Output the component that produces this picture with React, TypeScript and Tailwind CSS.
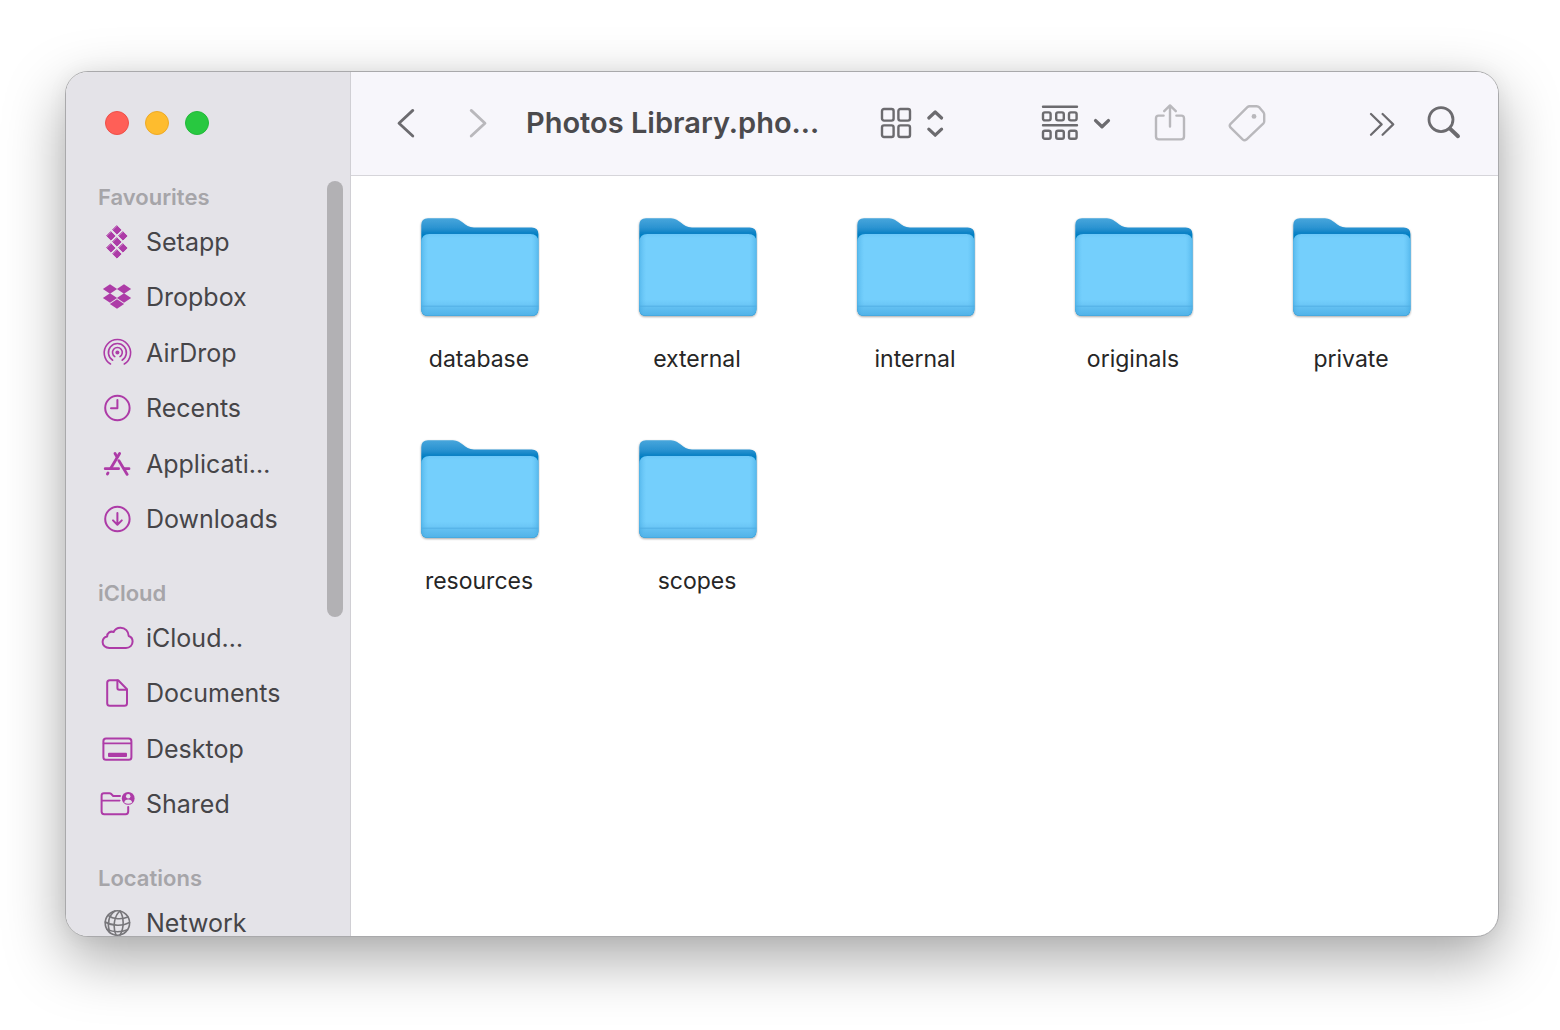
import type { ReactNode } from 'react'

const folders = ['database', 'external', 'internal', 'originals', 'private', 'resources', 'scopes']

function diamond(cx: number, cy: number, w: number, h: number) {
  return `M${cx} ${cy - h}L${cx + w} ${cy}L${cx} ${cy + h}L${cx - w} ${cy}Z`
}

function ItemIcon({ children }: { children: ReactNode }) {
  return (
    <svg
      viewBox="0 0 36 36"
      className="size-9 shrink-0"
      fill="none"
      stroke="currentColor"
      strokeWidth="2"
      strokeLinecap="round"
      strokeLinejoin="round"
      aria-hidden="true"
    >
      {children}
    </svg>
  )
}

const setappDiamonds = [[18, 6], [12, 12], [24, 12], [18, 18], [12, 24], [24, 24], [18, 30]]
const dropboxDiamonds = [[11, 10], [25, 10], [11, 19], [25, 19], [18, 25]]

const icons = {
  setapp: (
    <g fill="currentColor" strokeWidth="1">
      {setappDiamonds.map(([x, y]) => (
        <path key={`${x}-${y}`} d={diamond(x, y, 4.1, 4.1)} />
      ))}
    </g>
  ),
  dropbox: (
    <g fill="currentColor" stroke="none">
      {dropboxDiamonds.map(([x, y]) => (
        <path key={`${x}-${y}`} d={diamond(x, y, 7.1, 4.7)} />
      ))}
    </g>
  ),
  airdrop: (
    <g strokeWidth="1.6">
      <circle cx="18.4" cy="17.6" r="2" fill="currentColor" stroke="none" />
      <path d="M15.8 21.6A4.9 4.9 0 1 1 21 21.6" />
      <path d="M13.7 25.2A9 9 0 1 1 23.1 25.2" />
      <path d="M11.5 29A13.2 13.2 0 1 1 25.3 29" />
    </g>
  ),
  recents: (
    <>
      <circle cx="18.4" cy="18" r="12.2" />
      <path d="M18.4 10V18.2H12" />
    </>
  ),
  applications: (
    <g strokeWidth="2.8">
      <path d="M16 7.5L18.1 11" />
      <path d="M20.6 7.5L11.8 22.2" />
      <path d="M19.8 14.6L28.2 28.4" />
      <path d="M6.2 22.7H19.6M25.2 22.7H30" />
      <path d="M9 27L8.4 28" />
    </g>
  ),
  downloads: (
    <>
      <circle cx="18.4" cy="18" r="12.2" />
      <path d="M18.4 12V23.6M14 19.4L18.4 23.8L22.8 19.4" />
    </>
  ),
  icloud: (
    <path d="M10.4 28C6.5 28 3.6 25.4 3.6 22C3.6 19 5.4 17 8.2 16.4C8.1 12.9 11.5 10.8 14.6 12C16 9.2 18.8 7.6 21.6 7.7C26.2 7.8 29.6 11.2 29.7 16C32 16.7 33.6 19 33.6 21.6C33.6 25.2 30.8 28 27 28Z" />
  ),
  documents: (
    <>
      <path d="M10.8 5.2H19.2L28 14.2V28.2Q28 30.8 25.4 30.8H10.8Q8.2 30.8 8.2 28.2V7.8Q8.2 5.2 10.8 5.2Z" />
      <path d="M18.4 5.6V13Q18.4 14.8 20.2 14.8H27.6" />
    </>
  ),
  desktop: (
    <>
      <rect x="4.4" y="7.6" width="28" height="21.2" rx="2.6" />
      <path d="M4.6 12.4H32.2" strokeWidth="1.6" />
      <rect x="9" y="21.8" width="19" height="4.2" rx="1" fill="currentColor" stroke="none" />
    </>
  ),
  shared: (
    <>
      <path d="M21 10H14.2L12 7.8Q11.4 7.2 10.4 7.2H5Q2.6 7.2 2.6 9.6V25.6Q2.6 28.2 5.2 28.2H26.6Q29.2 28.2 29.2 25.6V21" />
      <path d="M2.8 14.6H20.8" strokeWidth="1.6" />
      <circle cx="29.2" cy="12.4" r="6.4" fill="currentColor" stroke="none" />
      <circle cx="29.2" cy="10.2" r="2.2" fill="#e4e3e8" stroke="none" />
      <path d="M25.2 16.4Q25.8 13.4 29.2 13.4T33.2 16.4Q31.4 17.7 29.2 17.7T25.2 16.4Z" fill="#e4e3e8" stroke="none" />
    </>
  ),
  network: (
    <g strokeWidth="1.6">
      <circle cx="18.4" cy="18" r="12.2" />
      <path d="M21 6C15 11 13.6 22 17 30" />
      <path d="M16 6C9.6 10 8 19 10.6 27.4" />
      <path d="M21 6C25 12 25.4 23 21 30" />
      <path d="M9 10.4C14 14.4 23 14.6 29 12" />
      <path d="M6.2 17C13 21 24 21.4 30.6 17.4" />
      <path d="M8 24.4C14 27.2 22 27.4 28.6 24.8" />
    </g>
  ),
}

type Item = { icon: keyof typeof icons; label: string }

const favourites: Item[] = [
  { icon: 'setapp', label: 'Setapp' },
  { icon: 'dropbox', label: 'Dropbox' },
  { icon: 'airdrop', label: 'AirDrop' },
  { icon: 'recents', label: 'Recents' },
  { icon: 'applications', label: 'Applicati…' },
  { icon: 'downloads', label: 'Downloads' },
]

const icloud: Item[] = [
  { icon: 'icloud', label: 'iCloud…' },
  { icon: 'documents', label: 'Documents' },
  { icon: 'desktop', label: 'Desktop' },
  { icon: 'shared', label: 'Shared' },
]

const locations: Item[] = [{ icon: 'network', label: 'Network' }]

function Section({ title, items, listClass, iconClass = 'text-[#ad3ba7]' }: {
  title: string
  items: Item[]
  listClass: string
  iconClass?: string
}) {
  return (
    <section>
      <h2 className="h-[33px] text-[22px] leading-8 font-semibold text-[#a6a5a9]">{title}</h2>
      <ul className={`flex flex-col pl-px ${listClass}`}>
        {items.map(({ icon, label }) => (
          <li key={label} className="flex flex-1">
            <a href="#" className={`flex flex-1 items-center gap-[11px] ${iconClass}`}>
              <ItemIcon>{icons[icon]}</ItemIcon>
              <span className="whitespace-nowrap text-[25px] leading-6 text-[#464548]">{label}</span>
            </a>
          </li>
        ))}
      </ul>
    </section>
  )
}

function Sidebar() {
  return (
    <aside className="flex w-[285px] shrink-0 flex-col border-r border-[#d0cfd4] bg-[#e4e3e8]">
      <div className="flex h-[109px] shrink-0 gap-4 pt-[39px] pl-[39px]">
        <button aria-label="Close" className="size-6 rounded-full border border-[#ee5048] bg-[#ff5f57]" />
        <button aria-label="Minimise" className="size-6 rounded-full border border-[#eeaa25] bg-[#febc2e]" />
        <button aria-label="Zoom" className="size-6 rounded-full border border-[#22b93a] bg-[#28c840]" />
      </div>
      <div className="flex min-h-0 flex-1">
        <nav className="flex min-w-0 flex-1 flex-col gap-[30px] overflow-hidden pl-8">
          <Section title="Favourites" items={favourites} listClass="h-[333px]" />
          <Section title="iCloud" items={icloud} listClass="h-[222px]" />
          <Section title="Locations" items={locations} listClass="h-[55px]" iconClass="text-[#77767a]" />
        </nav>
        <div className="mr-[7px] h-[436px] w-4 rounded-full bg-[#b2b1b4]" />
      </div>
    </aside>
  )
}

function Toolbar() {
  return (
    <header
      className="flex h-[104px] shrink-0 items-center border-b border-[#d6d5da] bg-[#f7f6fb] pr-[37px] pb-0.5 pl-11 text-[#6c6b6f] [&_svg]:fill-none [&_svg]:stroke-current"
    >
      <button aria-label="Back">
        <svg width="20" height="32" viewBox="0 0 20 32" strokeWidth="2.8" strokeLinecap="round" strokeLinejoin="round">
          <path d="M17.8 3.4L4 16.2L17.8 29" />
        </svg>
      </button>
      <button aria-label="Forward" className="ml-[53px] text-[#b9b8bc]">
        <svg width="20" height="32" viewBox="0 0 20 32" strokeWidth="2.8" strokeLinecap="round" strokeLinejoin="round">
          <path d="M3.2 3.4L17 16.2L3.2 29" />
        </svg>
      </button>
      <h1 className="ml-[38px] w-[354px] whitespace-nowrap text-[29px] leading-9 font-semibold text-[#4b4a4d]">
        Photos Library.pho…
      </h1>
      <button aria-label="View as icons" className="flex items-center gap-[14px]">
        <svg width="32" height="32" viewBox="0 0 32 32" strokeWidth="2.4">
          <rect x="2" y="2" width="11.6" height="11.6" rx="2" />
          <rect x="18.4" y="2" width="11.6" height="11.6" rx="2" />
          <rect x="2" y="18.4" width="11.6" height="11.6" rx="2" />
          <rect x="18.4" y="18.4" width="11.6" height="11.6" rx="2" />
        </svg>
        <svg width="18" height="32" viewBox="0 0 18 32" strokeWidth="3.2" strokeLinecap="round" strokeLinejoin="round">
          <path d="M2.8 11L9.2 5L15.6 11M2.8 22.2L9.2 28.2L15.6 22.2" />
        </svg>
      </button>
      <button aria-label="Group items" className="ml-[97px] flex items-center gap-[14px]">
        <svg width="38" height="38" viewBox="0 0 38 38" strokeWidth="2.4" strokeLinecap="round">
          <path d="M2 2.8H36M2 21.2H36" />
          <rect x="2" y="8.4" width="7.6" height="8" rx="1.8" />
          <rect x="15.2" y="8.4" width="7.6" height="8" rx="1.8" />
          <rect x="28" y="8.4" width="7.6" height="8" rx="1.8" />
          <rect x="2" y="26.8" width="7.6" height="8" rx="1.8" />
          <rect x="15.2" y="26.8" width="7.6" height="8" rx="1.8" />
          <rect x="28" y="26.8" width="7.6" height="8" rx="1.8" />
        </svg>
        <svg width="18" height="16" viewBox="0 0 18 16" strokeWidth="3.4" strokeLinecap="round" strokeLinejoin="round">
          <path d="M2.6 5.6L9 11.8L15.4 5.6" />
        </svg>
      </button>
      <button aria-label="Share" className="ml-[42px] text-[#b9b8bc]">
        <svg width="34" height="40" viewBox="0 0 34 40" strokeWidth="2.4" strokeLinecap="round" strokeLinejoin="round">
          <path d="M10.6 12.6H5.6Q3 12.6 3 15.2V33.6Q3 36.4 5.8 36.4H28.2Q31 36.4 31 33.6V15.2Q31 12.6 28.4 12.6H23.4" />
          <path d="M17 23.6V2.6M11.2 8.2L17 2.4L22.8 8.2" />
        </svg>
      </button>
      <button aria-label="Edit tags" className="ml-10 text-[#b9b8bc]">
        <svg width="40" height="40" viewBox="0 0 40 40" strokeWidth="2.4" strokeLinejoin="round">
          <path d="M22.6 3.2H29.6Q31.2 3.2 32.4 4.4L36.4 9.2Q37.2 10.2 37.2 11.6V18.4Q37.2 19.6 36.2 20.6L19.4 36.6Q17.4 38 15.6 36.4L3.4 24.4Q2 22.6 3.6 20.8L20.4 4.2Q21.4 3.2 22.6 3.2Z" />
          <circle cx="27" cy="13.4" r="2.4" fill="currentColor" stroke="none" />
        </svg>
      </button>
      <button aria-label="More toolbar items" className="ml-auto">
        <svg width="26" height="26" viewBox="0 0 26 26" strokeWidth="2.2" strokeLinecap="round" strokeLinejoin="round">
          <path d="M2 4L12.6 14.4L2 24.8M13.6 4L24.2 14.4L13.6 24.8" />
        </svg>
      </button>
      <button aria-label="Search" className="ml-8">
        <svg width="34" height="36" viewBox="0 0 34 36" strokeWidth="2.8" strokeLinecap="round">
          <circle cx="14" cy="14.6" r="12" />
          <path d="M23 23.6L31 31.2" strokeWidth="4" />
        </svg>
      </button>
    </header>
  )
}

function FolderIcon() {
  return (
    <svg width="122" height="102" viewBox="0 0 122 102" aria-hidden="true">
      <defs>
        <linearGradient id="folderBack" x1="0" y1="0" x2="0" y2="1">
          <stop offset="0" stopColor="#48a6dc" />
          <stop offset="0.1" stopColor="#2b93d1" />
          <stop offset="0.16" stopColor="#0580c4" />
        </linearGradient>
        <linearGradient id="folderFront" x1="0" y1="0" x2="0" y2="1">
          <stop offset="0" stopColor="#6cc8f8" />
          <stop offset="0.05" stopColor="#74cffc" />
          <stop offset="0.8" stopColor="#74cffc" />
          <stop offset="0.87" stopColor="#6bc6f6" />
          <stop offset="0.9" stopColor="#62bff1" />
          <stop offset="1" stopColor="#50b2e8" />
        </linearGradient>
        <linearGradient id="folderEdge" x1="0" y1="0" x2="1" y2="0">
          <stop offset="0" stopColor="#3ea6e0" stopOpacity="0.55" />
          <stop offset="0.06" stopColor="#5cbcf0" stopOpacity="0" />
          <stop offset="0.94" stopColor="#5cbcf0" stopOpacity="0" />
          <stop offset="1" stopColor="#3ea6e0" stopOpacity="0.55" />
        </linearGradient>
        <filter id="folderShadow" x="-5%" y="-5%" width="110%" height="112%">
          <feDropShadow dx="0" dy="1" stdDeviation="1" floodColor="#000" floodOpacity="0.4" />
        </filter>
      </defs>
      <path
        d="M3.3 8Q3.3 1.2 10 1.2H35C44 1.2 46 10.4 56 10.4H113.6Q120.4 10.4 120.4 17V92.4Q120.4 98.8 114 98.8H9.8Q3.3 98.8 3.3 92.4Z"
        fill="url(#folderBack)"
        filter="url(#folderShadow)"
      />
      <path
        d="M3.3 25Q3.8 17 11.3 17H112.4Q120 17 120.4 25V91.4Q120.4 98.8 113 98.8H10.8Q3.3 98.8 3.3 91.4Z"
        fill="url(#folderFront)"
      />
      <path
        d="M3.3 25Q3.8 17 11.3 17H112.4Q120 17 120.4 25V91.4Q120.4 98.8 113 98.8H10.8Q3.3 98.8 3.3 91.4Z"
        fill="url(#folderEdge)"
      />
      <path d="M3.3 89.2H120.4" stroke="#50aee2" strokeWidth="0.9" />
    </svg>
  )
}

export default function App() {
  return (
    <div className="flex h-screen bg-white pt-[71px] pr-[61px] pb-[93px] pl-[65px] font-['Inter',sans-serif]">
      <div className="flex min-w-0 flex-1 overflow-hidden rounded-[23px] border border-[#a9a9ab] bg-white shadow-[0_22px_60px_rgba(0,0,0,0.34),0_0_20px_rgba(0,0,0,0.05)]">
        <Sidebar />
        <main className="flex min-w-0 flex-1 flex-col">
          <Toolbar />
          <ul className="grid grid-cols-[repeat(auto-fill,218px)] gap-y-16 pt-[41px] pl-[19px]">
            {folders.map((name) => (
              <li key={name} className="flex flex-col items-center gap-6">
                <FolderIcon />
                <span className="text-[23px] leading-8 text-[#262626]">{name}</span>
              </li>
            ))}
          </ul>
        </main>
      </div>
    </div>
  )
}
